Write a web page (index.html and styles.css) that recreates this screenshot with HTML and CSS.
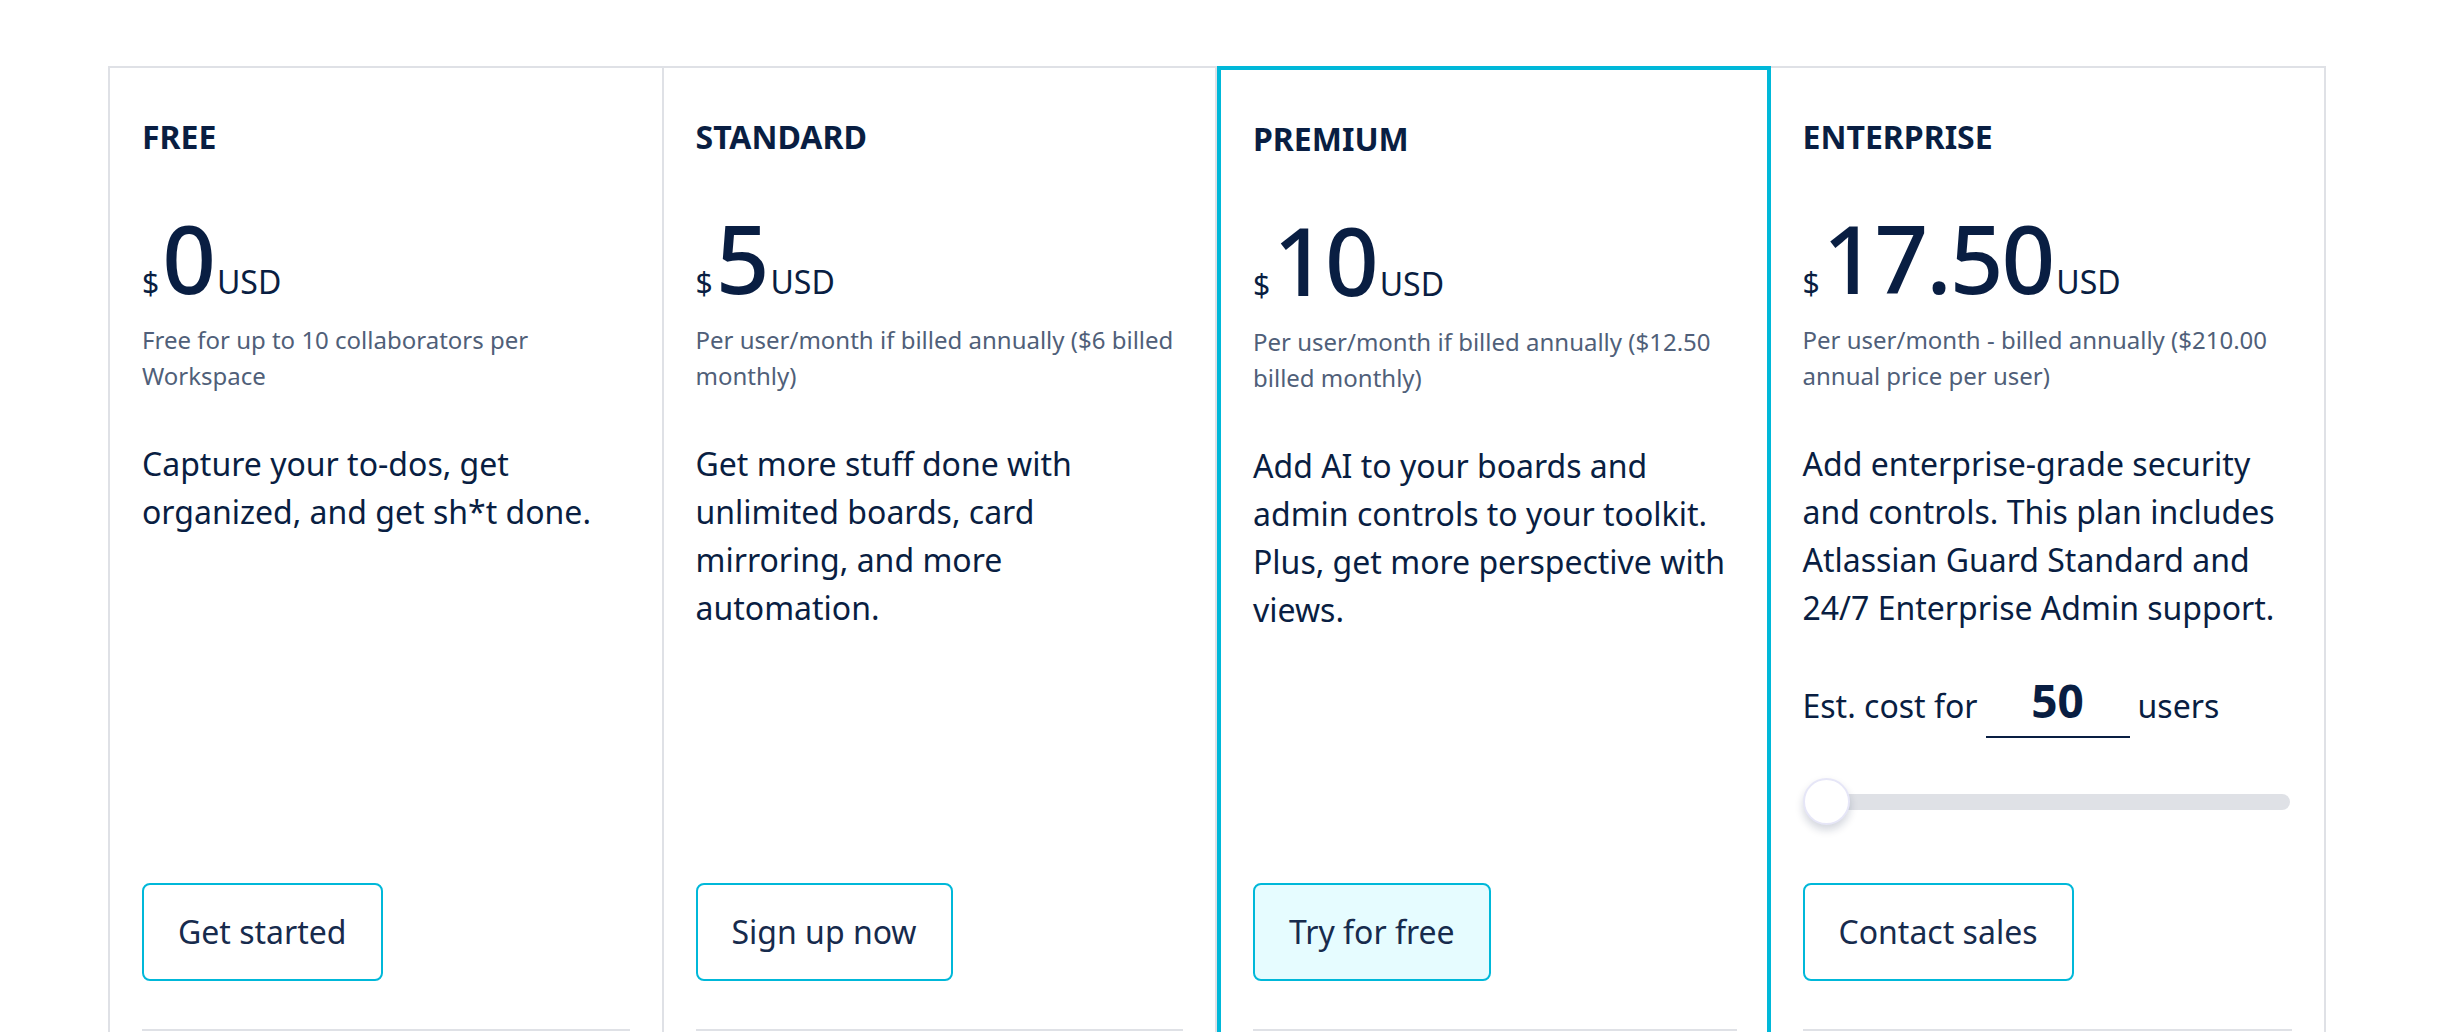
FILE: index.html
```html
<!DOCTYPE html>
<html lang="en">
<head>
<meta charset="utf-8">
<title>Trello pricing</title>
<link rel="stylesheet" href="styles.css">
</head>
<body>
<section class="plans">
  <article class="plan">
    <h3 class="plan-name">FREE</h3>
    <div class="price"><span class="cur">$</span><span class="amount">0</span><span class="unit">USD</span></div>
    <p class="note">Free for up to 10 collaborators per<br>Workspace</p>
    <p class="desc">Capture your to-dos, get<br>organized, and get sh*t done.</p>
    <a class="btn">Get started</a>
    <div class="rule"></div>
  </article>
  <article class="plan">
    <h3 class="plan-name">STANDARD</h3>
    <div class="price"><span class="cur">$</span><span class="amount">5</span><span class="unit">USD</span></div>
    <p class="note">Per user/month if billed annually ($6 billed<br>monthly)</p>
    <p class="desc">Get more stuff done with<br>unlimited boards, card<br>mirroring, and more<br>automation.</p>
    <a class="btn">Sign up now</a>
    <div class="rule"></div>
  </article>
  <article class="plan plan-featured">
    <h3 class="plan-name">PREMIUM</h3>
    <div class="price"><span class="cur">$</span><span class="amount">10</span><span class="unit">USD</span></div>
    <p class="note">Per user/month if billed annually ($12.50<br>billed monthly)</p>
    <p class="desc">Add AI to your boards and<br>admin controls to your toolkit.<br>Plus, get more perspective with<br>views.</p>
    <a class="btn btn-filled">Try for free</a>
    <div class="rule"></div>
  </article>
  <article class="plan plan-last">
    <h3 class="plan-name">ENTERPRISE</h3>
    <div class="price"><span class="cur">$</span><span class="amount">17.50</span><span class="unit">USD</span></div>
    <p class="note">Per user/month - billed annually ($210.00<br>annual price per user)</p>
    <p class="desc desc-fixed">Add enterprise-grade security<br>and controls. This plan includes<br>Atlassian Guard Standard and<br>24/7 Enterprise Admin support.</p>
    <div class="estimate"><span>Est. cost for</span><span class="users-input">50</span><span>users</span></div>
    <div class="slider"><div class="track"></div><div class="thumb"></div></div>
    <a class="btn">Contact sales</a>
    <div class="rule"></div>
  </article>
</section>
</body>
</html>
```
FILE: styles.css
```css
* { box-sizing: border-box; }
html, body { margin: 0; padding: 0; background: #ffffff; }
body {
  font-family: "Noto Sans", "Open Sans", sans-serif;
  color: #091e42;
  overflow: hidden;
  height: 1032px;
}
.plans {
  display: grid;
  grid-template-columns: repeat(4, 1fr);
  width: 2218px;
  margin: 66px 0 0 108px;
  border: 2px solid #dfe1e6;
  border-bottom: none;
}
.plan {
  display: flex;
  flex-direction: column;
  padding: 49px 32px 80px 32px;
  border-right: 2px solid #dfe1e6;
  min-width: 0;
}
.plan-last { border-right: none; }
.plan-featured {
  margin-top: -2px;
  border: 4px solid #00b8d9;
  padding: 49px 30px 76px 32px;
}
.plan-name {
  margin: 0;
  font-size: 32px;
  line-height: 40px;
  font-weight: 700;
  letter-spacing: 0;
}
.price {
  display: flex;
  align-items: baseline;
  margin-top: 54px;
  line-height: 1;
  white-space: nowrap;
}
.cur { font-size: 30px; line-height: 30px; }
.unit { font-size: 32px; line-height: 30px; }
.amount { font-size: 94px; line-height: 94px; font-weight: 500; letter-spacing: -2px; margin: 0 3px 0 3px; }
.note {
  margin: 17px 0 0 0;
  font-size: 24px;
  line-height: 36px;
  color: #505f79;
  white-space: nowrap;
}
.desc {
  margin: 46px 0 0 0;
  font-size: 32px;
  line-height: 48px;
  white-space: nowrap;
  flex: 1 0 auto;
}
.desc-fixed { flex: 0 0 auto; }
.estimate {
  display: flex;
  align-items: baseline;
  margin-top: 32px;
  font-size: 32px;
  line-height: 48px;
  white-space: nowrap;
}
.users-input {
  width: 144px;
  margin: 0 8px 0 8px;
  text-align: center;
  font-size: 46px;
  line-height: 72px;
  font-weight: 700;
  border-bottom: 2px solid #091e42;
}
.slider {
  position: relative;
  margin-top: 40px;
  height: 47px;
}
.track {
  margin: 16px 2px 0 8px;
  height: 16px;
  border-radius: 8px;
  background: #dfe1e6;
}
.thumb {
  position: absolute;
  left: 0;
  top: 0;
  width: 47px;
  height: 47px;
  border-radius: 50%;
  background: #ffffff;
  border: 2px solid #e6e6f7;
  box-shadow: 0 5px 8px rgba(9, 30, 66, 0.18);
}
.btn {
  align-self: flex-start;
  margin-top: 58px;
  display: block;
  padding: 23px 34px;
  font-size: 32px;
  line-height: 48px;
  color: #172b4d;
  border: 2px solid #00b8d9;
  border-radius: 8px;
  background: #ffffff;
  white-space: nowrap;
  cursor: pointer;
}
.btn-filled { background: #e6fcff; }
.rule {
  margin-top: 48px;
  border-top: 2px solid #dfe1e6;
}
```
